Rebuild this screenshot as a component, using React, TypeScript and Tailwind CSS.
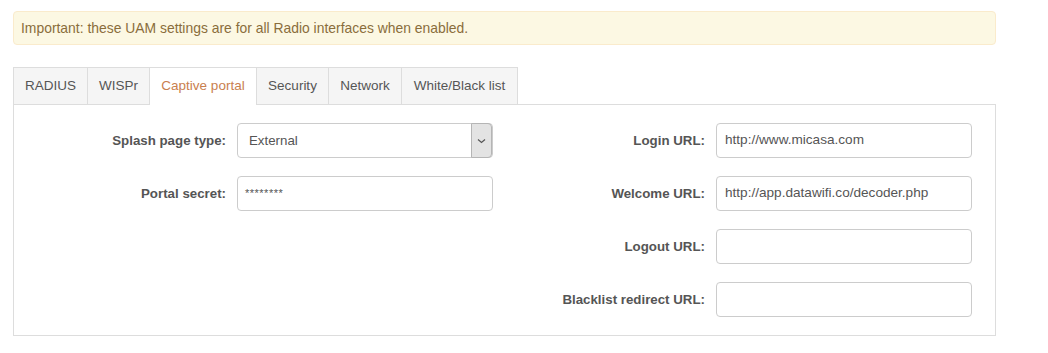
import React from 'react';

const tabs = [
  { label: 'RADIUS', width: 'w-[74px]' },
  { label: 'WISPr', width: 'w-[62px]' },
  { label: 'Captive portal', width: 'w-[107px]', active: true },
  { label: 'Security', width: 'w-[72px]' },
  { label: 'Network', width: 'w-[73px]' },
  { label: 'White/Black list', width: 'w-[116px]' },
];

const Field: React.FC<{ label: string; children: React.ReactNode }> = ({ label, children }) => (
  <div className="flex items-center h-[35px]">
    <label className="w-[212px] text-right text-[13.3px] font-bold text-[#555]">{label}</label>
    <div className="ml-[11px] w-[256px]">{children}</div>
  </div>
);

const TextInput: React.FC<{ value?: string }> = ({ value }) => (
  <div className="h-[35px] w-full rounded-[4px] border border-[#ccc] bg-white px-[8px] flex items-center text-[13.6px] text-[#555]">
    {value}
  </div>
);

export default function App() {
  return (
    <div className="w-[1048px] h-[353px] bg-white pt-[11px] pl-[13px] font-['Liberation_Sans',Arial,sans-serif]">
      {/* warning */}
      <div className="w-[983px] h-[34px] rounded-[4px] border border-[#faebcc] bg-[#fcf8e3] pl-[7px] flex items-center text-[13.9px] text-[#8a6d3b]">
        Important: these UAM settings are for all Radio interfaces when enabled.
      </div>

      <div className="mt-[22px] w-[983px]">
        <div className="flex h-[37px] border-l border-[#ddd]">
          {tabs.map((t) => (
            <div
              key={t.label}
              className={
                t.active
                  ? `${t.width} relative z-10 h-[38px] border-t border-r border-[#ddd] bg-white flex items-center justify-center text-[13.5px] text-[#c9804f]`
                  : `${t.width} h-[37px] border-t border-r border-[#ddd] bg-[#f5f5f5] flex items-center justify-center text-[13.5px] text-[#555]`
              }
            >
              {t.label}
            </div>
          ))}
        </div>

        <div className="h-[232px] border border-[#ddd] pt-[18px] flex">
          <div className="flex flex-col gap-[18px]">
            <Field label="Splash page type:">
              <div className="h-[35px] w-full rounded-[4px] border border-[#ccc] bg-white flex items-center text-[13.3px] text-[#555]">
                <span className="flex-1 pl-[11px]">External</span>
                <span className="h-[35px] -my-px w-[21px] rounded-r-[4px] border border-[#b5b5b5] bg-[#e3e3e3] flex items-center justify-center">
                  <svg width="9" height="6" viewBox="0 0 9 6" fill="none">
                    <path d="M1 1.5 L4.5 4.5 L8 1.5" stroke="#555" strokeWidth="1.2" />
                  </svg>
                </span>
              </div>
            </Field>
            <Field label="Portal secret:">
              <div className="h-[35px] w-full rounded-[4px] border border-[#ccc] bg-white px-[7px] flex items-center text-[11px] text-[#555] tracking-[0.5px]">
                ********
              </div>
            </Field>
          </div>
          <div className="flex flex-col gap-[18px]">
            <Field label="Login URL:">
              <TextInput value="http://www.micasa.com" />
            </Field>
            <Field label="Welcome URL:">
              <TextInput value="http://app.datawifi.co/decoder.php" />
            </Field>
            <Field label="Logout URL:">
              <TextInput />
            </Field>
            <Field label="Blacklist redirect URL:">
              <TextInput />
            </Field>
          </div>
        </div>
      </div>
    </div>
  );
}
